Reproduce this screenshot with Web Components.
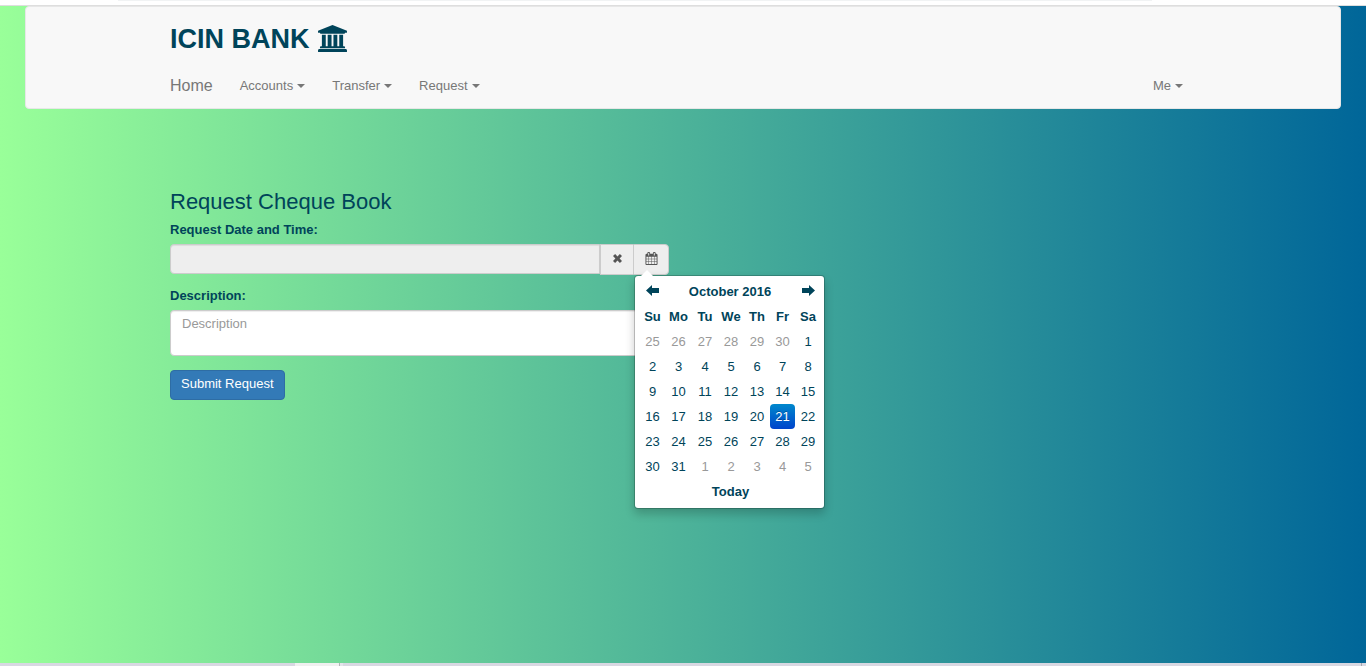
<!DOCTYPE html>
<html lang="en">
<head>
<meta charset="utf-8">
<title>ICIN Bank - Request Cheque Book</title>
<style>
html, body { height: 100%; margin: 0; }
body { font: 13px/18px "Liberation Sans", Arial, sans-serif; color: #00445a; }
</style>
</head>
<body>
<bank-page>
  <bank-navbar slot="header">
    <nav-item>Accounts</nav-item>
    <nav-item>Transfer</nav-item>
    <nav-item>Request</nav-item>
    <nav-item slot="end">Me</nav-item>
  </bank-navbar>
  <cheque-form></cheque-form>
</bank-page>
<script>
const define = (name, html, setup) => {
  customElements.define(name, class extends HTMLElement {
    constructor() {
      super();
      const t = document.createElement('template');
      t.innerHTML = '<style>*{box-sizing:border-box}</style>' + html;
      this.attachShadow({ mode: 'open' }).append(t.content.cloneNode(true));
      if (setup) setup(this.shadowRoot);
    }
  });
};

define('bank-page', `
<style>
:host { display: flex; flex-direction: column; min-height: 100vh; }
.top { height: 6px; background: #fff; border-bottom: 1px solid #dedede; padding: 0 214px 0 118px; }
.top div { height: 1px; background: #f1f3f4; }
.body { flex: 1; padding: 0 25px; background: linear-gradient(to right, #99ff99, #006699); }
main { max-width: 1026px; margin: 80px auto 0; }
.bottom { height: 3px; background: #d8d8e2; display: flex; padding: 0 4px 0 295px; }
.bottom div { width: 45px; background: #f0f0f0; border-right: 1px solid #b4b4b8; }
.bottom span { width: 3px; background: #e4e4ea; }
.bottom i { width: 1px; margin-left: auto; background: #a8a8ae; }
</style>
<div class="top"><div></div></div>
<div class="body"><slot name="header"></slot><main><slot></slot></main></div>
<div class="bottom"><div></div><span></span><i></i></div>`);

define('bank-navbar', `
<style>
:host { display: block; background: #f8f8f8; border: 1px solid #e7e7e7; border-radius: 4px; }
.inner { max-width: 1026px; margin: 0 auto; }
h1 { margin: 0; padding-top: 16px; font-size: 27px; line-height: 32px; display: flex; align-items: flex-start; gap: 8px; }
svg { width: 29px; height: 27px; margin-top: 2px; fill: currentColor; display: block; }
nav { display: flex; align-items: center; gap: 27px; height: 45px; margin-top: 8px; padding-right: 13px; }
a { color: #777; text-decoration: none; font-size: 16px; line-height: 20px; }
.end { margin-left: auto; }
</style>
<div class="inner">
<h1>ICIN BANK <svg viewBox="0 0 1920 1792" aria-hidden="true"><path d="M960 0l960 384v128h-128q0 26-20.5 45t-48.5 19h-1526q-28 0-48.5-19t-20.5-45h-128v-128zM256 640h256v768h128v-768h256v768h128v-768h256v768h128v-768h256v768h59q28 0 48.5 19t20.5 45v64h-1664v-64q0-26 20.5-45t48.5-19h59v-768zM1851 1600q28 0 48.5 19t20.5 45v128h-1920v-128q0-26 20.5-45t48.5-19h1782z"/></svg></h1>
<nav><a href="#">Home</a><slot></slot><div class="end"><slot name="end"></slot></div></nav>
</div>`);

define('nav-item', `
<style>
:host { display: block; }
a { display: flex; align-items: center; gap: 4px; color: #777; text-decoration: none; line-height: 18px; }
i { border: 4px solid transparent; border-top-color: currentColor; border-bottom: 0; }
</style>
<a href="#"><slot></slot><i></i></a>`);

define('date-picker', `
<style>
:host { display: block; position: absolute; top: 31px; right: -156px; width: 191px; padding: 3px 3px 4px 5px; background: #fff; background-clip: padding-box; border: 1px solid rgba(0,0,0,.2); border-radius: 4px; box-shadow: 0 5px 10px rgba(0,0,0,.2); box-sizing: border-box; }
:host::before { content: ""; position: absolute; left: 6px; top: -6px; border: 6px solid transparent; border-top: 0; border-bottom-color: #fff; }
table { border-collapse: collapse; table-layout: fixed; width: 100%; }
th, td { padding: 0; height: 25px; text-align: center; line-height: 18px; }
button { display: block; width: 100%; height: 25px; padding: 0; border: 0; border-radius: 4px; background: none; font: inherit; color: inherit; }
.out { color: #999; }
.on { color: #fff; background: linear-gradient(#0088cc, #0044cc); text-shadow: 0 -1px 0 rgba(0,0,0,.25); }
svg { display: block; width: 13px; height: 13px; margin: 0 auto 2px; fill: currentColor; }
.w25 { width: 25px; } .w26 { width: 26px; } .w27 { width: 27px; }
</style>
<table>
<colgroup><col class="w25"><col class="w27"><col class="w26"><col class="w26"><col class="w26"><col class="w25"><col class="w26"></colgroup>
<thead>
<tr><th><button aria-label="Previous month"><svg viewBox="0 0 13 13"><path d="M0 6.5 6 1V4H13V9H6V12Z"/></svg></button></th><th colspan="5">October 2016</th><th><button aria-label="Next month"><svg viewBox="0 0 13 13"><path d="M13 6.5 7 1V4H0V9H7V12Z"/></svg></button></th></tr>
<tr><th>Su</th><th>Mo</th><th>Tu</th><th>We</th><th>Th</th><th>Fr</th><th>Sa</th></tr>
</thead>
<tbody></tbody>
<tfoot><tr><th colspan="7"><button>Today</button></th></tr></tfoot>
</table>`, root => {
  const body = root.querySelector('tbody');
  for (let week = 0; week < 6; week++) {
    const row = body.insertRow();
    for (let day = 0; day < 7; day++) {
      const date = new Date(2016, 8, 25 + week * 7 + day);
      const button = document.createElement('button');
      button.textContent = date.getDate();
      if (date.getMonth() !== 9) button.className = 'out';
      else if (date.getDate() === 21) button.className = 'on';
      row.insertCell().append(button);
    }
  }
});

define('cheque-form', `
<style>
:host { display: block; }
form { max-width: 499px; }
h2 { margin: 0; font-size: 22px; line-height: 26px; font-weight: 400; }
label { display: block; font-weight: 700; margin: 6px 0 5px; }
.group { display: flex; position: relative; margin-bottom: 12px; }
input, textarea { display: block; font: inherit; color: #555; border: 1px solid #ccc; box-shadow: inset 0 1px 1px rgba(0,0,0,.075); padding: 4px 11px; border-radius: 4px; margin: 0; }
input { flex: 1; min-width: 0; height: 30px; background: #eee; border-radius: 4px 0 0 4px; }
textarea { width: 100%; height: 46px; resize: none; background: #fff; }
textarea::placeholder { color: #999; }
.addon { height: 31px; padding: 0 0 2px; border: 1px solid #ccc; background: #eee; color: #555; display: flex; align-items: center; justify-content: center; }
.clear { border-right: 0; width: 33px; }
.pick { width: 36px; border-radius: 0 4px 4px 0; }
svg { width: 13px; height: 13px; fill: currentColor; display: block; }
.submit { margin-top: 14px; height: 30px; padding: 0 10px 2px; border: 1px solid #2e6da4; border-radius: 4px; background: #337ab7; color: #fff; font: inherit; }
</style>
<form>
<h2>Request Cheque Book</h2>
<label for="when">Request Date and Time:</label>
<div class="group">
<input id="when" type="text" readonly>
<button type="button" class="addon clear" aria-label="Clear date"><svg viewBox="0 0 13 13"><path d="M2 4.1 4.1 2 6.5 4.4 8.9 2 11 4.1 8.6 6.5 11 8.9 8.9 11 6.5 8.6 4.1 11 2 8.9 4.4 6.5Z"/></svg></button>
<button type="button" class="addon pick" aria-label="Choose date"><svg viewBox="0 0 1792 1792"><path d="M192 1664h288v-288h-288v288zm352 0h320v-288h-320v288zm-352-352h288v-320h-288v320zm352 0h320v-320h-320v320zm-352-384h288v-288h-288v288zm736 736h320v-288h-320v288zm-384-736h320v-288h-320v288zm768 736h288v-288h-288v288zm-384-352h320v-320h-320v320zm-352-864v-288q0-13-9.5-22.5t-22.5-9.5h-64q-13 0-22.5 9.5t-9.5 22.5v288q0 13 9.5 22.5t22.5 9.5h64q13 0 22.5-9.5t9.5-22.5zm736 864h288v-320h-288v320zm-384-384h320v-288h-320v288zm384 0h288v-288h-288v288zm32-480v-288q0-13-9.5-22.5t-22.5-9.5h-64q-13 0-22.5 9.5t-9.5 22.5v288q0 13 9.5 22.5t22.5 9.5h64q13 0 22.5-9.5t9.5-22.5zm384-64v1280q0 52-38 90t-90 38h-1408q-52 0-90-38t-38-90v-1280q0-52 38-90t90-38h128v-96q0-66 47-113t113-47h64q66 0 113 47t47 113v96h384v-96q0-66 47-113t113-47h64q66 0 113 47t47 113v96h128q52 0 90 38t38 90z"/></svg></button>
<date-picker></date-picker>
</div>
<label for="desc">Description:</label>
<textarea id="desc" placeholder="Description"></textarea>
<button type="button" class="submit">Submit Request</button>
</form>`);
</script>
</body>
</html>
